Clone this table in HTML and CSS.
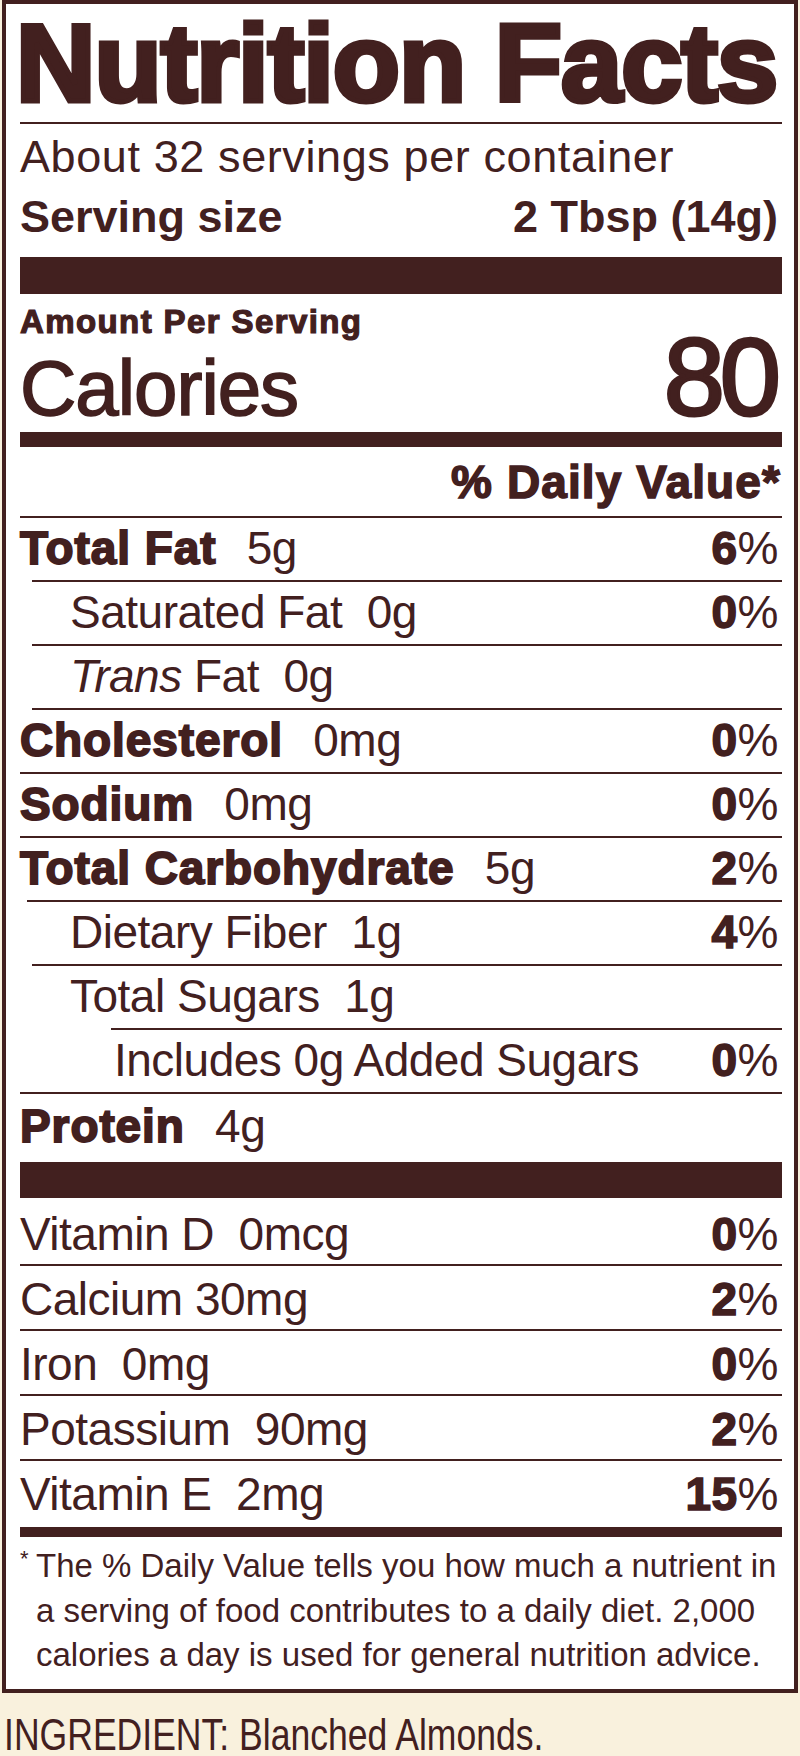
FILE: index.html
```html
<!DOCTYPE html>
<html lang="en">
<head>
<meta charset="utf-8">
<title>Nutrition Facts</title>
<link rel="stylesheet" href="styles.css">
</head>
<body>
<section class="label">
  <h1 class="title">Nutrition Facts</h1>
  <div class="rule"></div>
  <div class="servings">
    <p class="per-container">About 32 servings per container</p>
    <p class="serving-size"><span>Serving size</span><span>2 Tbsp (14g)</span></p>
  </div>
  <div class="bar bar-xl"></div>
  <p class="amount">Amount Per Serving</p>
  <div class="calories"><span class="cal-label">Calories</span><span class="cal-value">80</span></div>
  <div class="bar bar-md"></div>
  <p class="dv-head">% Daily Value*</p>
  <div class="rule"></div>

  <div class="row"><span><b class="nm">Total Fat</b> 5g</span><span class="pct"><b>6</b>%</span></div>
  <div class="rule i12"></div>
  <div class="row sub"><span>Saturated Fat&nbsp; 0g</span><span class="pct"><b>0</b>%</span></div>
  <div class="rule i12"></div>
  <div class="row sub"><span><i>Trans</i> Fat&nbsp; 0g</span><span class="pct"></span></div>
  <div class="rule i12"></div>
  <div class="row"><span><b class="nm">Cholesterol</b> 0mg</span><span class="pct"><b>0</b>%</span></div>
  <div class="rule"></div>
  <div class="row"><span><b class="nm">Sodium</b> 0mg</span><span class="pct"><b>0</b>%</span></div>
  <div class="rule"></div>
  <div class="row"><span><b class="nm">Total Carbohydrate</b> 5g</span><span class="pct"><b>2</b>%</span></div>
  <div class="rule i7"></div>
  <div class="row sub"><span>Dietary Fiber&nbsp; 1g</span><span class="pct"><b>4</b>%</span></div>
  <div class="rule i12"></div>
  <div class="row sub"><span>Total Sugars&nbsp; 1g</span><span class="pct"></span></div>
  <div class="rule i91"></div>
  <div class="row subsub"><span>Includes 0g Added Sugars</span><span class="pct"><b>0</b>%</span></div>
  <div class="rule"></div>
  <div class="row protein"><span><b class="nm">Protein</b> 4g</span><span class="pct"></span></div>

  <div class="bar bar-lg"></div>

  <div class="vit first"><span>Vitamin D&nbsp; 0mcg</span><span class="pct"><b>0</b>%</span></div>
  <div class="rule"></div>
  <div class="vit"><span>Calcium 30mg</span><span class="pct"><b>2</b>%</span></div>
  <div class="rule"></div>
  <div class="vit"><span>Iron&nbsp; 0mg</span><span class="pct"><b>0</b>%</span></div>
  <div class="rule"></div>
  <div class="vit"><span>Potassium&nbsp; 90mg</span><span class="pct"><b>2</b>%</span></div>
  <div class="rule"></div>
  <div class="vit"><span>Vitamin E&nbsp; 2mg</span><span class="pct"><b>15</b>%</span></div>

  <div class="bar bar-sm"></div>

  <p class="footnote"><span class="star">*</span>The % Daily Value tells you how much a nutrient in<br>a serving of food contributes to a daily diet. 2,000<br>calories a day is used for general nutrition advice.</p>
</section>
<p class="ingredient"><span class="ingredient-text">INGREDIENT: Blanched Almonds.</span></p>
</body>
</html>
```

FILE: styles.css
```css
* { box-sizing: border-box; }
html, body { margin: 0; padding: 0; }
body {
  background: #f9f1dd;
  color: #42201f;
  font-family: "Liberation Sans", Arial, sans-serif;
}
p, h1 { margin: 0; }

.label {
  margin: 0 2px;
  border: 4px solid #42201f;
  background: #fff;
  padding: 0 12px 0 14px;
}

.title {
  font-size: 110px;
  line-height: 118px;
  font-weight: 700;
  letter-spacing: -1px;
  margin-left: -4px;
  white-space: nowrap;
  -webkit-text-stroke: 5px #42201f;
}

.rule { height: 2px; background: #42201f; }
.rule.i7 { margin-left: 7px; }
.rule.i12 { margin-left: 12px; }
.rule.i91 { margin-left: 91px; }

.bar { background: #42201f; }
.bar-xl { height: 37px; margin-top: 10px; }
.bar-md { height: 15px; }
.bar-lg { height: 36px; }
.bar-sm { height: 10px; margin-top: 3px; }

.servings { padding-top: 3px; }
.per-container {
  font-size: 45px;
  line-height: 60px;
  letter-spacing: 0.6px;
  white-space: nowrap;
}
.serving-size {
  display: flex;
  justify-content: space-between;
  font-size: 45px;
  line-height: 60px;
  font-weight: 700;
  padding-right: 4px;
}

.amount {
  padding-top: 10px;
  font-size: 33px;
  line-height: 36px;
  font-weight: 700;
  letter-spacing: 1.4px;
  -webkit-text-stroke: 1.2px #42201f;
}

.calories {
  display: flex;
  justify-content: space-between;
  align-items: baseline;
  height: 92px;
}
.cal-label {
  font-size: 78px;
  line-height: 78px;
  letter-spacing: -1px;
  -webkit-text-stroke: 1.6px #42201f;
}
.cal-value {
  font-size: 110px;
  line-height: 74px;
  letter-spacing: -5px;
  margin-right: 6px;
  -webkit-text-stroke: 3px #42201f;
}

.dv-head {
  padding: 7px 1px 6px 0;
  font-size: 46px;
  line-height: 56px;
  font-weight: 700;
  text-align: right;
  letter-spacing: 1.1px;
  -webkit-text-stroke: 1.5px #42201f;
}

.row, .vit {
  display: flex;
  justify-content: space-between;
  font-size: 46px;
  line-height: 60px;
  padding-right: 4px;
  letter-spacing: -0.5px;
  white-space: nowrap;
}
.row { padding-bottom: 2px; }
.row.sub { padding-left: 50px; }
.row.subsub { padding-left: 94px; }
.row.protein { padding-top: 2px; padding-bottom: 6px; }

.nm {
  font-weight: 700;
  letter-spacing: 0.9px;
  margin-right: 18px;
  -webkit-text-stroke: 1.8px #42201f;
}
.pct b {
  font-weight: 700;
  letter-spacing: 0.5px;
  -webkit-text-stroke: 1.5px #42201f;
}

.vit { padding-top: 3px; }
.vit.first { padding-top: 6px; }

.footnote {
  padding: 7px 0 11.5px 16px;
  text-indent: -16px;
  font-size: 33px;
  line-height: 44.5px;
  white-space: nowrap;
}
.star {
  display: inline-block;
  width: 16px;
  text-indent: 0;
  font-size: 22px;
  line-height: 30px;
  vertical-align: top;
}

.ingredient {
  padding: 21.5px 0 0 4px;
  font-size: 45px;
  line-height: 40px;
  white-space: nowrap;
}
.ingredient-text {
  display: inline-block;
  transform: scaleX(0.79);
  transform-origin: left center;
}
```
